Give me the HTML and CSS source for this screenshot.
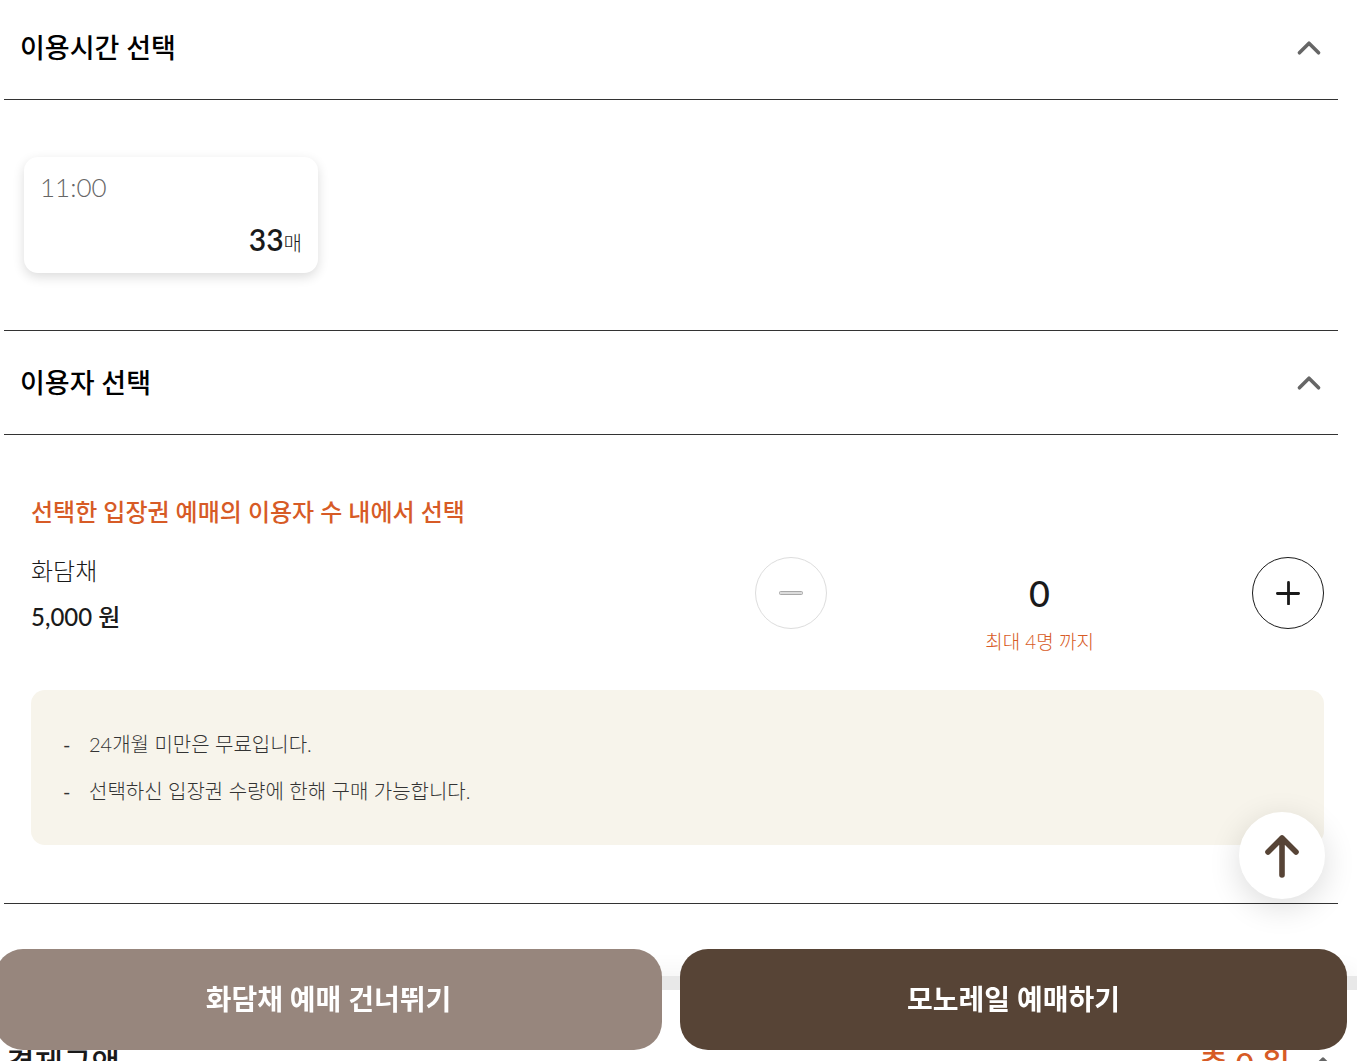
FILE: index.html
```html
<!DOCTYPE html>
<html lang="ko">
<head>
<meta charset="utf-8">
<meta name="viewport" content="width=device-width, initial-scale=1">
<title>화담채 예매</title>
<link rel="stylesheet" href="styles.css">
</head>
<body>
<div class="page">
  <main class="booking">
    <section class="panel">
      <h2 class="panel-head">
        <button class="panel-toggle" type="button" aria-expanded="true">
          <span>이용시간 선택</span>
          <svg class="chevron" viewBox="0 0 24 16" aria-hidden="true"><path d="M3 13 12 4l9 9"/></svg>
        </button>
      </h2>
      <div class="panel-body times">
        <button class="time-card" type="button">
          <span class="time">11:00</span>
          <span class="left"><strong>33</strong>매</span>
        </button>
      </div>
    </section>

    <section class="panel">
      <h2 class="panel-head">
        <button class="panel-toggle" type="button" aria-expanded="true">
          <span>이용자 선택</span>
          <svg class="chevron" viewBox="0 0 24 16" aria-hidden="true"><path d="M3 13 12 4l9 9"/></svg>
        </button>
      </h2>
      <div class="panel-body people">
        <h3 class="guide">선택한 입장권 예매의 이용자 수 내에서 선택</h3>
        <div class="item">
          <div class="item-info">
            <p class="item-name">화담채</p>
            <p class="item-price">5,000 원</p>
          </div>
          <div class="counter">
            <button class="round" type="button" aria-label="빼기" disabled>
              <svg class="sign" viewBox="0 0 24 24" aria-hidden="true"><rect x="0.5" y="10.5" width="23" height="3" rx="1" fill="#dcdcdc" stroke="#a8a8a8"/></svg>
            </button>
            <div class="count">
              <output class="count-value">0</output>
              <span class="count-limit">최대 4명 까지</span>
            </div>
            <button class="round" type="button" aria-label="더하기">
              <svg class="sign" viewBox="0 0 24 24" aria-hidden="true"><path d="M1.4 12.5h21.2M12.5 1.4v21.6" fill="none" stroke="#1a1a1a" stroke-width="2.8" stroke-linecap="round"/></svg>
            </button>
          </div>
        </div>
        <ul class="notes">
          <li>24개월 미만은 무료입니다.</li>
          <li>선택하신 입장권 수량에 한해 구매 가능합니다.</li>
        </ul>
      </div>
    </section>
  </main>

  <section class="payment">
    <h2 class="payment-title">결제금액</h2>
    <p class="payment-total">총 0 원</p>
    <svg class="chevron" viewBox="0 0 24 16" aria-hidden="true"><path d="M3 13 12 4l9 9"/></svg>
  </section>
</div>

<button class="to-top" type="button" aria-label="맨 위로">
  <svg class="arrow" viewBox="0 0 36 44" aria-hidden="true"><path d="M18 41V4M4 18 18 4l14 14"/></svg>
</button>

<div class="actions">
  <button class="action skip" type="button">화담채 예매 건너뛰기</button>
  <button class="action next" type="button">모노레일 예매하기</button>
</div>
</body>
</html>
```
FILE: styles.css
```css
* {
  box-sizing: border-box;
}

body {
  margin: 0;
  overflow: hidden;
  color: #1a1a1a;
  background: #fff;
  font-family: Lato, "Noto Sans CJK KR", sans-serif;
}

h2, h3, p, ul {
  margin: 0;
  padding: 0;
  font-size: inherit;
  font-weight: inherit;
}

button {
  margin: 0;
  padding: 0;
  border: 0;
  background: none;
  color: inherit;
  font: inherit;
  cursor: pointer;
}

.page {
  height: 100vh;
  overflow-y: auto;
  scrollbar-width: none;
}

.booking {
  padding: 0 19px 72px 4px;
}

.panel {
  border-bottom: 1px solid #333;
}

.panel-head {
  border-bottom: 1px solid #333;
}

.panel-toggle {
  display: flex;
  align-items: center;
  justify-content: space-between;
  width: 100%;
  padding: 34px 16px 33px;
  color: #000;
  font-size: 27px;
  font-weight: 500;
  line-height: 36px;
}

.panel:first-child .panel-toggle {
  padding-top: 30px;
}

.chevron {
  width: 26px;
  height: 17px;
  fill: none;
  stroke: #666;
  stroke-width: 3.4;
  stroke-linecap: round;
  stroke-linejoin: round;
}

.panel-toggle .chevron {
  margin-bottom: 2px;
}

.times {
  padding: 57px 20px;
}

.time-card {
  display: flex;
  flex-direction: column;
  justify-content: space-between;
  width: 294px;
  height: 116px;
  padding: 12px 16px;
  border-radius: 14px;
  background: #fff;
  box-shadow: 0 4px 12px rgba(0, 0, 0, 0.14);
  line-height: 36px;
}

.time {
  align-self: flex-start;
  color: #666;
  font-size: 26px;
  font-weight: 300;
}

.left {
  align-self: flex-end;
  color: #1a1a1a;
  font-size: 20px;
  font-weight: 300;
}

.left strong {
  font-size: 30px;
  font-weight: 600;
}

.people {
  padding: 57px 14px 58px 27px;
}

.guide {
  color: #d75b26;
  font-size: 24px;
  font-weight: 500;
  line-height: 40px;
}

.item {
  display: flex;
  justify-content: space-between;
  margin-top: 25px;
}

.item-name {
  font-size: 24px;
  font-weight: 300;
  line-height: 28px;
}

.item-price {
  margin-top: 14px;
  font-size: 24px;
  font-weight: 500;
  line-height: 36px;
}

.counter {
  display: flex;
  align-items: flex-start;
  justify-content: space-between;
  width: 44%;
}

.round {
  display: flex;
  align-items: center;
  justify-content: center;
  width: 72px;
  height: 72px;
  border: 1px solid #1a1a1a;
  border-radius: 50%;
}

.round:disabled {
  border-color: #ddd;
}

.sign {
  width: 24px;
  height: 24px;
}

.count {
  display: flex;
  flex-direction: column;
  align-items: center;
}

.count-value {
  font-size: 36px;
  font-weight: 500;
  line-height: 72px;
}

.count-limit {
  color: #d75b26;
  font-size: 19px;
  font-weight: 300;
  line-height: 26px;
}

.notes {
  display: flex;
  flex-direction: column;
  gap: 15px;
  margin-top: 35px;
  padding: 38px 32px;
  border-radius: 14px;
  background: #f7f4eb;
  color: #333;
  font-size: 20px;
  font-weight: 300;
  line-height: 32px;
  list-style: none;
}

.notes li {
  display: flex;
}

.notes li::before {
  content: "-";
  width: 26px;
  font-weight: 400;
}

.payment {
  display: flex;
  align-items: center;
  padding: 50px 21px 40px 6px;
  border-top: 14px solid #e8e8e8;
  box-shadow: 0 -8px 20px rgba(0, 0, 0, 0.04);
  font-size: 31px;
  font-weight: 500;
  line-height: 46px;
}

.payment-total {
  margin-left: auto;
  padding-right: 20px;
  color: #d75b26;
}

.to-top {
  position: fixed;
  right: 32px;
  bottom: 162px;
  display: flex;
  align-items: center;
  justify-content: center;
  width: 86px;
  height: 87px;
  border-radius: 50%;
  background: #fff;
  box-shadow: 0 8px 32px rgba(0, 0, 0, 0.14);
}

.arrow {
  width: 36px;
  height: 44px;
  fill: none;
  stroke: #574436;
  stroke-width: 5.6;
  stroke-linecap: round;
  stroke-linejoin: round;
}

.actions {
  position: fixed;
  right: 10px;
  bottom: 11px;
  left: -5px;
  display: flex;
  gap: 18px;
}

.action {
  flex: 1;
  padding: 30px 0 31px;
  border-radius: 28px;
  color: #fff;
  font-size: 28px;
  font-weight: 700;
  line-height: 40px;
}

.skip {
  background: #97867d;
}

.next {
  background: #574436;
}
```
